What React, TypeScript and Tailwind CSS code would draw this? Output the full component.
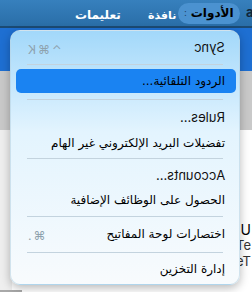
const ar = "font-['DejaVu_Sans',sans-serif]";
const lat = "font-['Inter','Noto_Sans',sans-serif]";

function Sep({ h, pt }: { h: string; pt: string }) {
  return (
    <div className={`${h} ${pt} px-4`}>
      <div className="h-px bg-[#c3d3de]" />
    </div>
  );
}

function Row({
  label,
  latin,
  shortcut,
  h = "h-[24px]",
  active,
}: {
  label: string;
  latin?: boolean;
  shortcut?: string;
  h?: string;
  active?: boolean;
}) {
  return (
    <div
      dir="ltr"
      className={`${h} mx-[5px] flex w-[220px] items-center rounded-[5px] pl-[10px] pr-[11px] ${
        active ? "bg-[#1a83f2]" : ""
      }`}
    >
      <div className="w-[40px] shrink-0">
        {shortcut && (
          <span className={`${lat} inline-block [transform:scaleX(-1)] text-[12px] tracking-[2px] text-[#8ea2ae]`}>
            {shortcut}
          </span>
        )}
      </div>
      <div className="flex min-w-0 flex-1 justify-end whitespace-nowrap">
        {latin ? (
          <span className={`${lat} inline-block [transform:scaleX(-1)] text-[13px] text-[#111]`}>{label}</span>
        ) : (
          <span dir="rtl" className={`${ar} shrink-0 text-[12px] text-black`}>
            {label}
          </span>
        )}
      </div>
    </div>
  );
}

export default function App() {
  return (
    <div className="relative h-[292px] w-[252px] overflow-hidden bg-white">
      {/* menu bar */}
      <div className="flex h-[28px] items-center border-b-2 border-[#1b4a73] bg-gradient-to-b from-[#3780bd] to-[#2a6ea8]">
        <div className="w-[75px] shrink-0" />
        <div className="w-[73px] shrink-0">
          <span className={`${ar} text-[12px] font-bold text-white`}>تعليمات</span>
        </div>
        <div className="w-[30px] shrink-0 pr-[5px] text-right">
          <span className={`${ar} text-[11px] font-bold text-white`}>نافذة</span>
        </div>
        <div className="flex h-[21px] w-[62px] shrink-0 items-center justify-center gap-[4px] rounded-full bg-[#4b92d0]">
          <span className="text-[9px] text-[#1b3a55]">:</span>
          <span className={`${ar} text-[12px] font-bold text-black`}>الأدوات</span>
        </div>
        <span className={`${lat} ml-[6px] text-[13px] font-bold text-[#10263a]`}>a</span>
      </div>

      {/* window behind the menu */}
      <div className="h-[43px] bg-[#1e6fd2]" />
      <div className="h-[59px] bg-[#c9c9c9]" />
      <div className="flex h-[160px]">
        <div className="w-[12px] bg-[#efefef]" />
        <div className="flex flex-1 flex-col items-end pt-[92px] pr-[1px]">
          <span className={`${lat} text-[14px] leading-[16px] text-black`}>U</span>
          <span className={`${lat} text-[13px] leading-[15px] text-[#333]`}>Te</span>
          <span className={`${lat} text-[13px] leading-[16px] text-[#333]`}>eT</span>
        </div>
      </div>
      <div className="flex h-[8px]">
        <div className="w-[22px] bg-[#a9a9a9]" />
        <div className="ml-[52px] mt-[2px] h-[6px] w-[6px] rounded-full bg-[#1a6fd8]" />
        <div className="ml-[40px] mt-[4px] h-[4px] w-[100px] bg-[#222]" />
      </div>

      {/* dropdown menu */}
      <div className="absolute left-[10px] top-[30px] flex h-[255px] w-[230px] flex-col rounded-[10px] border border-[#b9d3e3]/60 bg-gradient-to-b from-[#a2d8fa] via-[#e3f4fe] via-40% to-[#f8fbfd] pt-[5px] shadow-[0_3px_10px_rgba(0,0,0,0.28)]">
        <Row label="Sync" latin shortcut="⌃⌘K" />
        <Sep h="h-[9px]" pt="pt-[4px]" />
        <Row label="الردود التلقائية..." active />
        <Sep h="h-[12px]" pt="pt-[6px]" />
        <Row label="Rules..." latin h="h-[25px]" />
        <Row label="تفضيلات البريد الإلكتروني غير الهام" h="h-[25px]" />
        <Sep h="h-[9px]" pt="pt-[3px]" />
        <Row label="Accounts..." latin />
        <Row label="الحصول على الوظائف الإضافية" h="h-[23px]" />
        <Sep h="h-[11px]" pt="pt-[5px]" />
        <Row label="اختصارات لوحة المفاتيح" shortcut="⌘." />
        <Sep h="h-[11px]" pt="pt-[6px]" />
        <Row label="إدارة التخزين" h="h-[23px]" />
      </div>
    </div>
  );
}
